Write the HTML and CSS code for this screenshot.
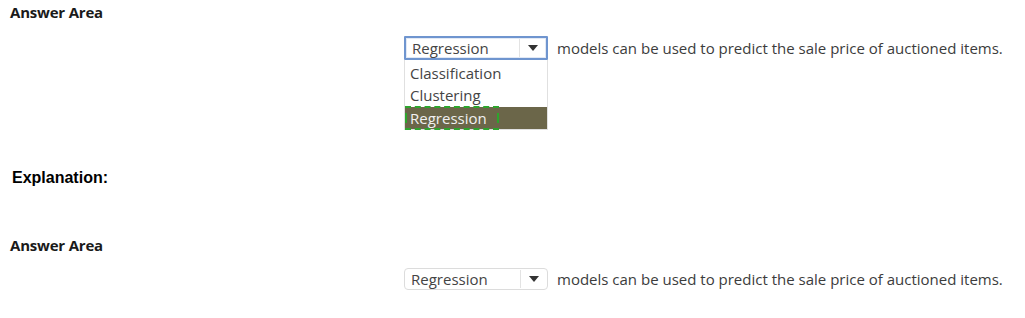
FILE: index.html
```html
<!DOCTYPE html>
<html lang="en">
<head>
    <meta charset="UTF-8">
    <title>Answer Area</title>
    <link rel="stylesheet" href="styles.css">
</head>
<body>
    <section class="answer-area">
        <h2 class="area-title">Answer Area</h2>
        <div class="answer-row">
            <div class="dropdown dropdown-open">
                <div class="dropdown-field">
                    <span class="dropdown-value">Regression</span>
                    <span class="dropdown-arrow"></span>
                </div>
                <ul class="dropdown-list">
                    <li>Classification</li>
                    <li>Clustering</li>
                    <li class="selected"><span class="selected-label">Regression</span></li>
                </ul>
            </div>
            <span class="answer-text">models can be used to predict the sale price of auctioned items.</span>
        </div>
    </section>

    <h3 class="explanation">Explanation:</h3>

    <section class="answer-area answer-area-final">
        <h2 class="area-title">Answer Area</h2>
        <div class="answer-row">
            <div class="dropdown">
                <div class="dropdown-field">
                    <span class="dropdown-value">Regression</span>
                    <span class="dropdown-arrow"></span>
                </div>
            </div>
            <span class="answer-text">models can be used to predict the sale price of auctioned items.</span>
        </div>
    </section>
</body>
</html>
```

FILE: styles.css
```css
body {
    margin: 0;
    background: #ffffff;
    color: #3a3a3a;
    font-family: 'Open Sans', 'Noto Sans', sans-serif;
    font-size: 13px;
}

.answer-area {
    padding: 0 0 0 10px;
}

.area-title {
    margin: 0;
    padding-top: 1px;
    font-size: 15px;
    font-weight: 700;
    line-height: 22px;
    color: #1a1a1a;
    letter-spacing: -0.2px;
}

.answer-row {
    display: flex;
    align-items: center;
    margin-top: 13px;
    padding-left: 394px;
}

.dropdown {
    position: relative;
    width: 144px;
    margin-right: 9px;
}

.dropdown-field {
    display: flex;
    align-items: center;
    height: 20px;
    border: 1px solid #dcdcdc;
    border-radius: 4px;
    background: #ffffff;
    color: #444444;
}

.dropdown-open .dropdown-field {
    border: 2px solid #6f95cf;
    border-radius: 1px;
    height: 20px;
    box-shadow: inset 0 0 0 1px #e2e9f5;
}

.dropdown-value {
    flex: 1;
    padding-left: 6px;
    line-height: 20px;
    font-size: 15px;
}

.dropdown-arrow {
    position: relative;
    width: 26px;
    height: 18px;
    border-left: 1px solid #e3e3e3;
}

.dropdown-arrow::after {
    content: "";
    position: absolute;
    left: 8px;
    top: 6px;
    border-left: 5px solid transparent;
    border-right: 5px solid transparent;
    border-top: 6px solid #333333;
}

.dropdown-list {
    position: absolute;
    top: 100%;
    left: 0;
    width: 142px;
    margin: 0;
    padding: 2px 0 0 0;
    list-style: none;
    background: #ffffff;
    border: 1px solid #e0e0e0;
    border-top: none;
    font-size: 15px;
    color: #444444;
}

.dropdown-list li {
    height: 22px;
    line-height: 22px;
    padding-left: 5px;
}

.dropdown-list li.selected {
    background: #6b6649;
    color: #f1f1f1;
    padding-left: 0;
    margin-top: 1px;
}

.selected-label {
    display: inline-block;
    height: 24px;
    margin-top: -1px;
    padding: 0 12px 0 5px;
    border-bottom: 2px dashed #2da52d;
    border-top: 2px dashed #2da52d;
    box-sizing: border-box;
    line-height: 20px;
    position: relative;
    vertical-align: top;
}

.selected-label::before,
.selected-label::after {
    content: "";
    position: absolute;
    top: 5px;
    width: 2px;
    height: 10px;
    background: #2da52d;
}

.selected-label::before {
    left: 0;
}

.selected-label::after {
    right: 0;
}

.answer-text {
    font-size: 15px;
    color: #3c3c3c;
}

.explanation {
    margin: 0;
    padding: 108px 0 0 12px;
    font-family: 'Liberation Sans', Arial, sans-serif;
    font-size: 16px;
    font-weight: 700;
    line-height: 20px;
    color: #000000;
}

.answer-area-final {
    padding-top: 45px;
}

.answer-area-final .answer-row {
    margin-top: 12px;
}
```
